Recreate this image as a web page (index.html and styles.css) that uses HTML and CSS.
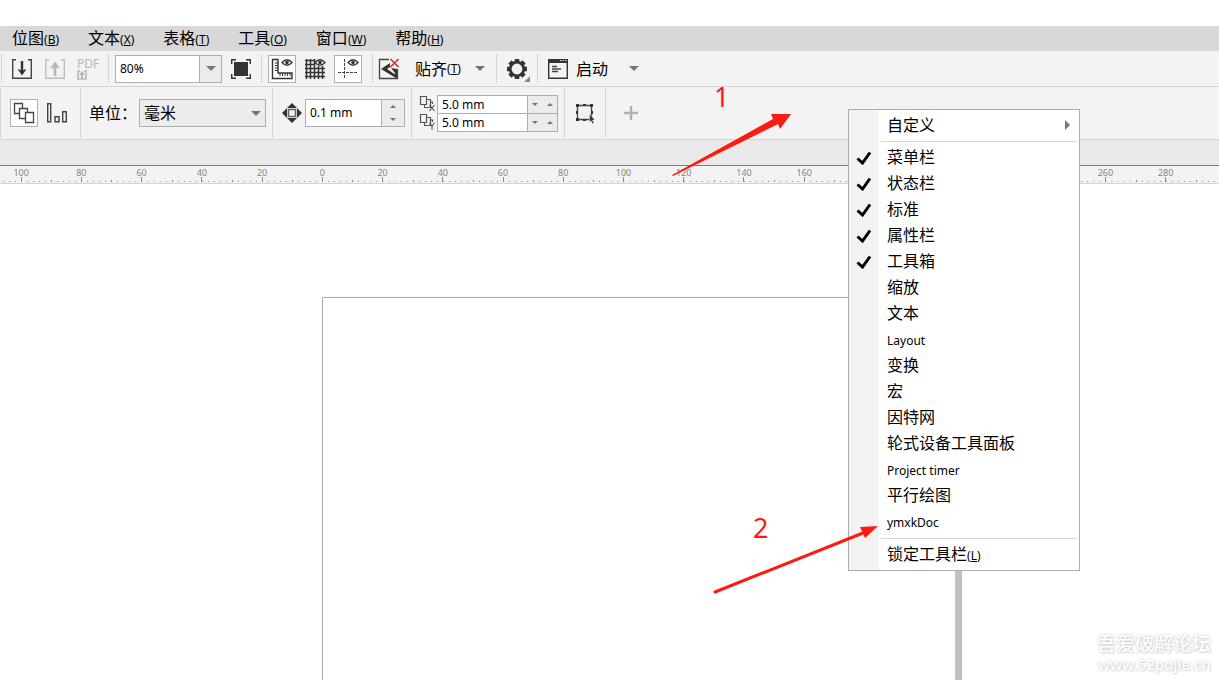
FILE: index.html
```html
<!DOCTYPE html>
<html lang="zh-CN">
<head>
<meta charset="utf-8">
<title>工具栏菜单</title>
<link rel="stylesheet" href="styles.css">
</head>
<body>
<div class="app">
  <nav class="menubar">
    <button type="button">位图<small>(<u>B</u>)</small></button>
    <button type="button">文本<small>(<u>X</u>)</small></button>
    <button type="button">表格<small>(<u>T</u>)</small></button>
    <button type="button">工具<small>(<u>O</u>)</small></button>
    <button type="button">窗口<small>(<u>W</u>)</small></button>
    <button type="button">帮助<small>(<u>H</u>)</small></button>
  </nav>

  <div class="bar standard">
    <div class="group g-files">
      <button type="button" class="icon" aria-label="导入"><svg width="22" height="22" viewBox="0 0 22 22"><path d="M5 1.700H1.700v18.600h18.600V1.700H17" fill="none" stroke="#444" stroke-width="1.400"/><path d="M11 3v10" stroke="#333" stroke-width="2.400"/><path d="M6.500 11l4.500 6.500 4.500-6.500-4.500 1.500z" fill="#333"/></svg></button>
      <button type="button" class="icon" aria-label="导出" disabled><svg width="22" height="22" viewBox="0 0 22 22"><path d="M5 1.700H1.700v18.600h18.600V1.700H17" fill="none" stroke="#bebebe" stroke-width="1.400"/><path d="M11 8v10" stroke="#b8b8b8" stroke-width="2.600"/><path d="M6 10.500l5-7 5 7-5-1z" fill="#b8b8b8"/></svg></button>
      <button type="button" class="icon pdf" aria-label="发布为 PDF" disabled><span>PDF</span><svg width="10" height="10" viewBox="0 0 10 10"><path d="M3 1H1v8h8V1H7" fill="none" stroke="#b8b8b8" stroke-width="1.500"/><path d="M5 8V4" stroke="#b8b8b8" stroke-width="2"/><path d="M2 5l3-4 3 4z" fill="#b8b8b8"/></svg></button>
    </div>
    <div class="group g-zoom">
      <div class="combo"><input type="text" value="80%" aria-label="缩放级别"><button type="button" aria-label="展开缩放级别"><i class="caret"></i></button></div>
      <button type="button" class="icon" aria-label="全屏预览"><svg width="22" height="22" viewBox="0 0 22 22"><path d="M4 4h14v14H4z" fill="#333"/><path d="M6 1.700H1.700V6M16 1.700h4.300V6M6 20.300H1.700V16M16 20.300h4.300V16" fill="none" stroke="#333" stroke-width="1.400"/></svg></button>
    </div>
    <div class="group g-view">
      <button type="button" class="toggle on" aria-label="显示标尺"><svg width="26" height="26" viewBox="0 0 26 26"><path d="M3.500 3.500h5.500v13.500h14v5.500h-19.500z" fill="none" stroke="#333" stroke-width="1.400"/><path d="M6 7h3M6 9.500h3M6 12h3M6 14.500h3M11 17v3M13.500 17v3M16 17v3M18.500 17v3M21 17v3" stroke="#333"/><path d="M13 6.500q5-5.500 10 0q-5 5.500-10 0z" fill="none" stroke="#333" stroke-width="1.300"/><circle cx="18" cy="6.500" r="1.800" fill="#333"/></svg></button>
      <button type="button" class="toggle" aria-label="显示网格"><svg width="26" height="26" viewBox="0 0 26 26"><path d="M4.500 3v20M8.500 3v20M12.500 3v20M16.500 10v13M20.500 10v13M3 4.500h9M3 8.500h9M3 12.500h20M3 16.500h20M3 20.500h20" stroke="#333" stroke-width="1.500"/><path d="M13 6.500q5-5.500 10 0q-5 5.500-10 0z" fill="#f3f3f3" stroke="#333" stroke-width="1.300"/><circle cx="18" cy="6.500" r="1.800" fill="#333"/></svg></button>
      <button type="button" class="toggle on" aria-label="显示辅助线"><svg width="26" height="26" viewBox="0 0 26 26"><path d="M9.500 3v20" stroke="#444" stroke-dasharray="3 1"/><path d="M3 16.500h20" stroke="#444" stroke-dasharray="3 1"/><path d="M13 6.500q5-5.500 10 0q-5 5.500-10 0z" fill="none" stroke="#333" stroke-width="1.300"/><circle cx="18" cy="6.500" r="1.800" fill="#333"/></svg></button>
    </div>
    <div class="group g-snap">
      <button type="button" class="icon" aria-label="关闭贴齐"><svg width="22" height="22" viewBox="0 0 22 22"><path d="M11 1.500H1.500v19h18V11" fill="none" stroke="#444" stroke-width="1.300"/><path d="M3 11l9-6v4l-3 2 9 6v3l-15-9z" fill="#333"/><path d="M13 10l6 1v9l-2-1v-4z" fill="#333"/><path d="M12.500 1l8 8M20.500 1l-8 8" stroke="#e8282b" stroke-width="1.700"/></svg></button>
      <button type="button" class="drop">贴齐<small>(<u>T</u>)</small><i class="caret"></i></button>
    </div>
    <div class="group g-options">
      <button type="button" class="icon" aria-label="选项"><svg width="26" height="26" viewBox="0 0 26 26"><path d="M13 3v20M3 13h20M5.900 5.900l14.200 14.200M20.100 5.900L5.900 20.100" stroke="#333" stroke-width="4.500"/><circle cx="13" cy="13" r="6.800" fill="#f3f3f3" stroke="#333" stroke-width="2.800"/><path d="M26 20v6h-6z" fill="#888"/></svg></button>
    </div>
    <div class="group g-launch">
      <button type="button" class="drop launch"><svg width="20" height="20" viewBox="0 0 20 20"><path d="M.700.700h18.600v18.600H.700z" fill="none" stroke="#333" stroke-width="1.400"/><path d="M0 0h20v4H0z" fill="#333"/><path d="M12 1.500h1.500M14.500 1.500H16M17 1.500h1.500" stroke="#ddd"/><path d="M4 7.500h5M4 10h9M4 12.500h6" stroke="#444" stroke-width="1.300"/></svg>启动<i class="caret"></i></button>
    </div>
  </div>

  <div class="bar property">
    <div class="group p-mode">
      <button type="button" class="toggle on" aria-label="再制"><svg width="26" height="26" viewBox="0 0 26 26"><g fill="#fff" stroke="#444" stroke-width="1.300"><path d="M3.500 3.500h8v10h-8z"/><path d="M8.500 8.500h8v10h-8z"/><path d="M14.500 12.500h8v10h-8z"/></g></svg></button>
      <button type="button" class="icon" aria-label="对齐"><svg width="22" height="22" viewBox="0 0 22 22"><path d="M1.700 1.700h3v18h-3zM9 14.700h4v5H9zM16.700 9.700h3.600v10h-3.600z" fill="none" stroke="#444" stroke-width="1.400"/></svg></button>
    </div>
    <div class="group p-unit">
      <label for="unit">单位：</label>
      <span class="select"><select id="unit"><option>毫米</option></select></span>
    </div>
    <div class="group p-nudge">
      <svg width="20" height="20" viewBox="0 0 20 20"><path d="M10 0l5 5H5zM10 20l5-5H5zM0 10l5-5v10zM20 10l-5-5v10z" fill="#333"/><path d="M6.500 6.500h7v7h-7z" fill="#f3f3f3" stroke="#666" stroke-width="1.600"/></svg>
      <div class="combo nudge"><input type="text" value="0.1 mm" aria-label="微调距离"><span class="spin"><button type="button" aria-label="增加"><i class="tri up"></i></button><button type="button" aria-label="减少"><i class="tri"></i></button></span></div>
    </div>
    <div class="group p-dup">
      <div class="icons">
        <svg width="18" height="18" viewBox="0 0 18 18"><path d="M1.500 1.500h6v8h-6zM7.500 4.500h4v8h-6v-3M11.500 7h2v2" fill="none" stroke="#555" stroke-width="1.200"/><path d="M10.500 10l5 6M15.500 10l-5 6" stroke="#444" stroke-width="1.100"/></svg>
        <svg width="18" height="18" viewBox="0 0 18 18"><path d="M1.500 1.500h6v8h-6zM7.500 4.500h4v8h-6v-3M11.500 7h2v2" fill="none" stroke="#555" stroke-width="1.200"/><path d="M10.500 10l2.500 3 2.500-3M13 13v3.500" fill="none" stroke="#444" stroke-width="1.100"/></svg>
      </div>
      <div class="pair">
        <div class="line"><input type="text" value="5.0 mm" aria-label="X 偏移"><button type="button" aria-label="减少 X"><i class="tri"></i></button><button type="button" aria-label="增加 X"><i class="tri up"></i></button></div>
        <div class="line"><input type="text" value="5.0 mm" aria-label="Y 偏移"><button type="button" aria-label="减少 Y"><i class="tri"></i></button><button type="button" aria-label="增加 Y"><i class="tri up"></i></button></div>
      </div>
    </div>
    <div class="group p-box">
      <button type="button" class="icon" aria-label="选择框"><svg width="22" height="22" viewBox="0 0 22 22"><path d="M3.500 3.500h14v14h-14z" fill="none" stroke="#444" stroke-width="1.300"/><path d="M2 2h3v3H2zM9 2h3v2H9zM16 2h3v3h-3zM2 9h2v3H2zM2 16h3v3H2zM9 17h3v2H9zM17 9h2v3h-2z" fill="#333"/><path d="M15.500 12l5.500 6h-2.500l1.500 3-1.500.800-1.500-3-1.500 1.700z" fill="#333" stroke="#f3f3f3" stroke-width=".5"/></svg></button>
    </div>
    <div class="group p-add">
      <button type="button" class="icon" aria-label="添加"><svg width="14" height="14" viewBox="0 0 14 14"><path d="M7 0v14M0 7h14" stroke="#b0b0b0" stroke-width="2.400"/></svg></button>
    </div>
  </div>

  <div class="tabs"></div>
  <div class="ruler">
    <span>100</span><span>80</span><span>60</span><span>40</span><span>20</span><span>0</span><span>20</span><span>40</span><span>60</span><span>80</span><span>100</span><span>120</span><span>140</span><span>160</span><span></span><span></span><span></span><span></span><span>260</span><span>280</span><span></span>
  </div>
  <main class="canvas"><div class="sheet"></div></main>

  <div class="popup" role="menu">
    <button type="button" role="menuitem" class="more">自定义</button>
    <hr>
    <button type="button" role="menuitem"><svg class="tick" viewBox="0 0 16 14"><path d="M1.500 7.500l5 4.500L14 1.500" /></svg>菜单栏</button>
    <button type="button" role="menuitem"><svg class="tick" viewBox="0 0 16 14"><path d="M1.500 7.500l5 4.500L14 1.500" /></svg>状态栏</button>
    <button type="button" role="menuitem"><svg class="tick" viewBox="0 0 16 14"><path d="M1.500 7.500l5 4.500L14 1.500" /></svg>标准</button>
    <button type="button" role="menuitem"><svg class="tick" viewBox="0 0 16 14"><path d="M1.500 7.500l5 4.500L14 1.500" /></svg>属性栏</button>
    <button type="button" role="menuitem"><svg class="tick" viewBox="0 0 16 14"><path d="M1.500 7.500l5 4.500L14 1.500" /></svg>工具箱</button>
    <button type="button" role="menuitem">缩放</button>
    <button type="button" role="menuitem">文本</button>
    <button type="button" role="menuitem" class="latin">Layout</button>
    <button type="button" role="menuitem">变换</button>
    <button type="button" role="menuitem">宏</button>
    <button type="button" role="menuitem">因特网</button>
    <button type="button" role="menuitem">轮式设备工具面板</button>
    <button type="button" role="menuitem" class="latin">Project timer</button>
    <button type="button" role="menuitem">平行绘图</button>
    <button type="button" role="menuitem" class="latin">ymxkDoc</button>
    <hr>
    <button type="button" role="menuitem" class="last">锁定工具栏<small>(<u>L</u>)</small></button>
  </div>

  <svg class="arrow one" width="120" height="64" viewBox="0 0 120 64"><path d="M0 62L101 6l-2-5 20 0-11 15-2-5L1 63z" fill="#fc1b10"/></svg>
  <svg class="arrow two" width="166" height="72" viewBox="0 0 166 72"><path d="M2 68L150 9" stroke="#fc1b10" stroke-width="3" stroke-linecap="round"/><path d="M165 2l-18 1 5 11z" fill="#fc1b10"/></svg>
  <span class="note n1">1</span>
  <span class="note n2">2</span>
  <div class="watermark"><span>吾爱破解论坛</span><span>www.52pojie.cn</span></div>
</div>
</body>
</html>
```
FILE: styles.css
```css
* { box-sizing: border-box; }
body { margin: 0; background: #fff; color: #000; font: 16px/24px "Noto Sans", "Noto Sans CJK SC", sans-serif; }
button, input, select { font: inherit; color: inherit; border: 0; padding: 0; margin: 0; background: none; border-radius: 0; }
input { min-width: 0; }
svg { display: block; flex: none; }
small { font-size: 12px; }
u { text-underline-offset: 1px; }

.app { position: relative; display: flex; flex-direction: column; height: 100vh; overflow: hidden; padding-top: 26px; }
.menubar { display: flex; gap: 29px; height: 25px; padding-left: 12px; background: #d8d8d8; flex: none; }
.menubar button { white-space: nowrap; }

.bar { display: flex; flex: none; background: #f3f3f3; border-bottom: 1px solid #d4d4d4; }
.standard { height: 36px; padding: 3px 0 3px 1px; }
.property { height: 53px; padding: 1px 0; }
.group { display: flex; align-items: center; flex: none; border-left: 1px solid #d4d4d4; }
.icon { display: flex; align-items: center; justify-content: center; }
.toggle { width: 28px; height: 28px; border: 1px solid transparent; }
.toggle.on { background: #fff; border-color: #b0b0b0; }
.caret { border: 5px solid transparent; border-top-color: #777; border-bottom: 0; }
.tri { border: 3px solid transparent; border-top-color: #777; border-bottom: 0; }
.tri.up { border-top: 0; border-bottom: 3px solid #777; }

.g-files { width: 107px; padding-left: 9px; gap: 11px; }
.pdf { flex-direction: column; align-items: flex-start; color: #b8b8b8; font: 12px/12px "Noto Sans", sans-serif; }
.g-zoom { width: 153px; padding-left: 6px; gap: 8px; }
.combo { display: flex; width: 107px; height: 28px; border: 1px solid #aeaeae; background: #fff; font-size: 12px; }
.combo input { flex: 1; padding-left: 4px; }
.combo > button { display: flex; align-items: center; justify-content: center; width: 22px; background: #ececec; border-left: 1px solid #aeaeae; }
.g-view { width: 111px; padding-left: 6px; gap: 5px; }
.g-snap { width: 124px; padding-left: 5px; gap: 15px; }
.drop { display: flex; align-items: center; }
.drop .caret { margin-left: 14px; }
.g-options { width: 41px; padding-left: 7px; }
.g-launch { padding-left: 10px; }
.launch svg { margin-right: 8px; }
.launch .caret { margin-left: 21px; }

.p-mode { width: 80px; padding-left: 9px; gap: 8px; }
.p-unit { width: 192px; padding-left: 8px; justify-content: space-between; padding-right: 6px; }
.select { position: relative; }
.select::after { content: ""; position: absolute; right: 5px; top: 12px; border: 5px solid transparent; border-top-color: #777; border-bottom: 0; pointer-events: none; }
.select select { display: block; appearance: none; width: 127px; height: 28px; padding-left: 4px; background: #ececec; border: 1px solid #aeaeae; }
.p-nudge { width: 139px; padding-left: 9px; gap: 3px; }
.nudge { width: 100px; }
.spin { display: flex; flex-direction: column; width: 23px; background: #ececec; border-left: 1px solid #aeaeae; }
.spin button { flex: 1; display: flex; align-items: center; justify-content: center; }
.p-dup { width: 153px; padding-left: 7px; }
.icons { display: grid; }
.pair { display: grid; width: 121px; border: 1px solid #aeaeae; font-size: 12px; background: #fff; }
.line { display: grid; grid-template-columns: 1fr 15px 15px; height: 17px; }
.line + .line { height: 18px; border-top: 1px solid #aeaeae; }
.line input { padding: 1px 0 0 4px; line-height: 16px; }
.line button { display: flex; align-items: center; justify-content: center; background: #ececec; }
.line input + button { border-left: 1px solid #aeaeae; }
.p-box { width: 41px; padding-left: 9px; }
.p-add { padding-left: 18px; }

.tabs { height: 25px; flex: none; background: #e9e9e9; }
.ruler { display: grid; grid-template-columns: repeat(21, 1fr); flex: none; height: 19px; margin: 0 -37px 0 -9px; background: #f3f3f3; border-top: 1px solid #1b9ce2; border-bottom: 1px solid #d4d4d4; }
.ruler span {
  text-align: center; font-size: 9px; line-height: 13px; color: #858585;
  background:
    linear-gradient(#888, #888) center bottom 1px / 1px 5px no-repeat,
    linear-gradient(#888, #888) left bottom 1px / 1px 2px no-repeat,
    linear-gradient(90deg, #888 1px, transparent 1px) left bottom 1px / 10% 1px repeat-x;
}
.canvas { flex: 1; display: flex; padding: 113px 0 0 322px; }
.sheet { width: 640px; border: 1px solid #a9a9a9; border-bottom: 0; border-right: 7px solid #c0c0c0; }

.popup { position: absolute; left: 848px; top: 109px; width: 232px; padding: 3px 0 2px; border: 1px solid #adadad; background: linear-gradient(90deg, #f3f3f3 30px, #fff 30px); }
.popup button { position: relative; display: block; width: 100%; height: 26px; padding: 0 0 2px 38px; text-align: left; line-height: 22px; }
.popup .latin { padding-bottom: 0; font-size: 12px; line-height: 28px; }
.popup .last { line-height: 24px; }
.popup hr { height: 1px; border: 0; margin: 2px 2px 3px 32px; background: #d4d4d4; }
.popup .latin + hr { margin-top: 3px; }
.tick { position: absolute; left: 7px; top: 6px; width: 16px; height: 14px; fill: none; stroke: #000; stroke-width: 3; }
.more::after { content: ""; position: absolute; right: 9px; top: 7px; border: 5px solid transparent; border-left-color: #777; border-right: 0; }

.arrow, .note, .watermark { position: absolute; }
.one { left: 672px; top: 113px; }
.two { left: 713px; top: 524px; }
.note { color: #fc1b10; font-size: 27px; line-height: 32px; }
.n1 { left: 714px; top: 81px; }
.n2 { left: 753px; top: 512px; }
.watermark { right: 8px; bottom: 7px; display: grid; text-align: right; color: #fff; font-size: 19px; line-height: 22px; font-weight: 500; text-shadow: 0 0 3px #c4c4c4, 1px 1px 2px #ddd; }
.watermark span + span { font-size: 15px; line-height: 18px; }
```
